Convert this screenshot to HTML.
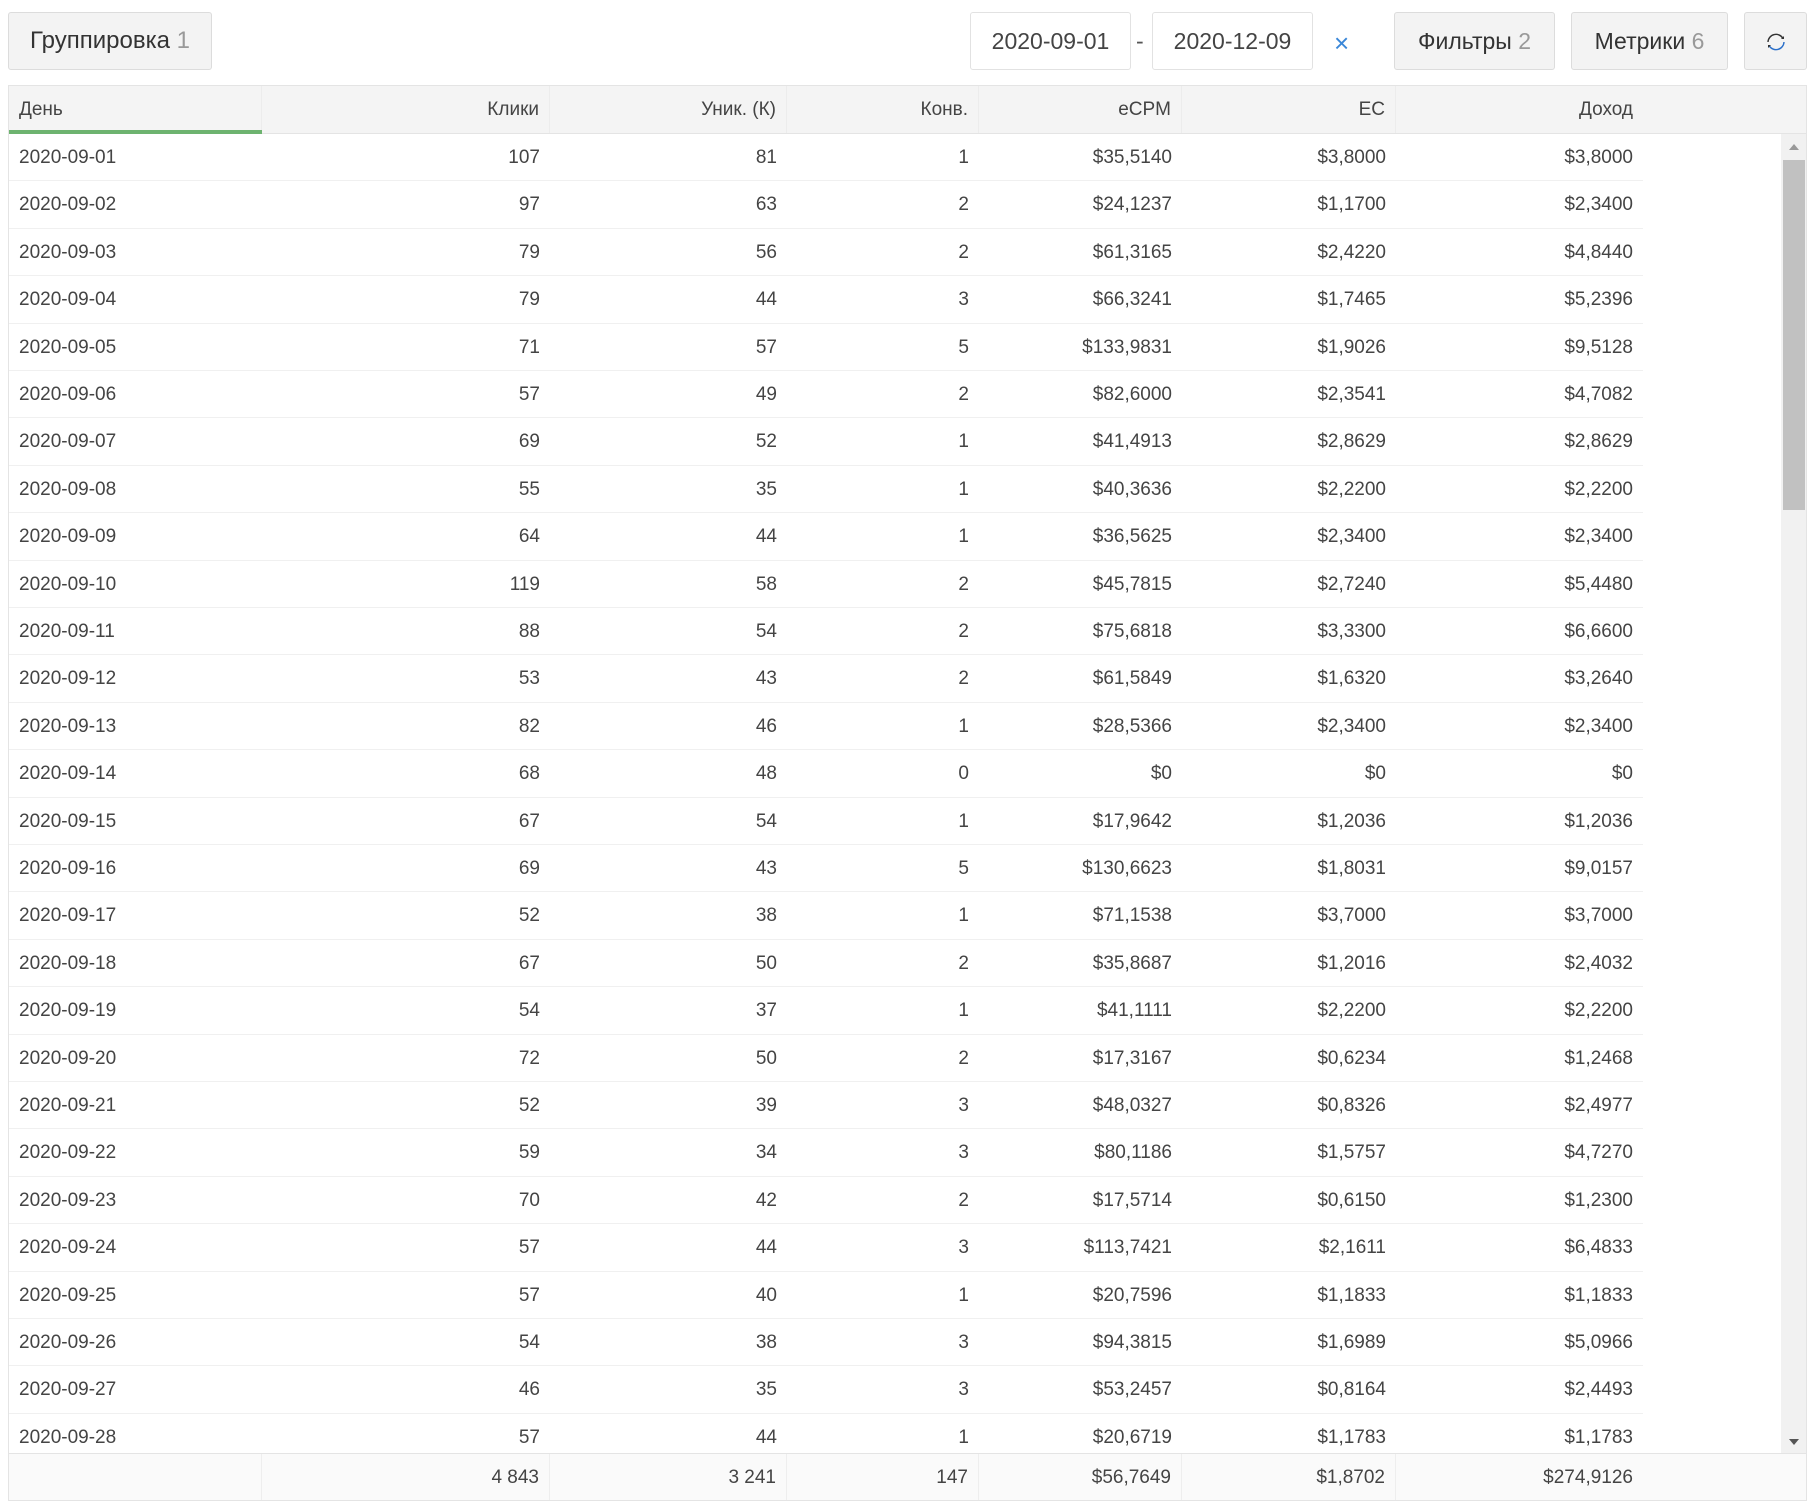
<!DOCTYPE html>
<html><head><meta charset="utf-8"><style>
*{box-sizing:border-box;margin:0;padding:0}
body{width:1815px;height:1508px;background:#fff;font-family:"Liberation Sans",Arial,sans-serif;color:#333;position:relative;overflow:hidden}
.btn{position:absolute;top:12px;height:58px;border:1px solid #dcdcdc;border-radius:3px;background:#f3f3f3;font-size:23px;line-height:56px;text-align:center;color:#333}
.btn span{color:#999}
.inp{position:absolute;top:12px;height:58px;border:1px solid #e2e2e2;border-radius:3px;background:#fff;font-size:23px;line-height:56px;text-align:center;color:#444}
.tbl{position:absolute;left:8px;top:85px;width:1799px;height:1416px;border:1px solid #e4e4e4;overflow:hidden}
.row{position:absolute;left:0;height:47.4px;width:1634px;border-bottom:1px solid #f0f0f0;font-size:19px;color:#444}
.row div{position:absolute;top:0;height:100%;line-height:47px;text-align:right;padding-right:10px}
.hdr{position:absolute;left:0;top:0;width:1799px;height:48px;background:#f4f4f4;border-bottom:1px solid #e4e4e4}
.hdr div{position:absolute;top:0;height:47px;line-height:48px;text-align:right;padding-right:10px;font-size:19px;color:#444;border-right:1px solid #ececec}
.ftr{position:absolute;left:0;top:1367px;width:1799px;height:48px;background:#fafafa;border-top:1px solid #e4e4e4}
.ftr div{position:absolute;top:0;height:47px;line-height:47px;text-align:right;padding-right:10px;font-size:19px;color:#444;border-right:1px solid #eee}
.c0{left:0;width:253px;text-align:left!important;padding-left:10px}
.c1{left:253px;width:288px}.c2{left:541px;width:237px}.c3{left:778px;width:192px}.c4{left:970px;width:203px}.c5{left:1173px;width:214px}.c6{left:1387px;width:247px}
.sb{position:absolute;left:1772px;top:48px;width:26px;height:1319px;background:#f1f1f1}
</style></head><body>
<div class="btn" style="left:8px;width:204px;font-size:24px">Группировка <span>1</span></div>
<div class="inp" style="left:970px;width:161px">2020-09-01</div>
<div style="position:absolute;left:1136px;top:12px;line-height:58px;font-size:23px;color:#555">-</div>
<div class="inp" style="left:1152px;width:161px">2020-12-09</div>
<div style="position:absolute;left:1334px;top:14px;line-height:58px;font-size:26px;color:#3a87d8">×</div>
<div class="btn" style="left:1394px;width:161px">Фильтры <span>2</span></div>
<div class="btn" style="left:1571px;width:157px">Метрики <span>6</span></div>
<div class="btn" style="left:1744px;width:63px"><svg width="24" height="24" viewBox="0 0 24 24" style="margin-top:17px"><path d="M4 12a8 8 0 0 1 15-3.5" fill="none" stroke="#333" stroke-width="1.4"/><path d="M20 12a8 8 0 0 1-15 3.5" fill="none" stroke="#2a6fc9" stroke-width="1.4"/><path d="M17 9l3 0 0-3z" fill="#333"/><path d="M7 15l-3 0 0 3z" fill="#333"/></svg></div>
<div class="tbl">
<div class="hdr"><div class="c0">День<span style="position:absolute;left:0;bottom:-1px;width:253px;height:4px;background:#6db36f"></span></div><div class="c1">Клики</div><div class="c2">Уник. (К)</div><div class="c3">Конв.</div><div class="c4">eCPM</div><div class="c5">EC</div><div class="c6" style="border-right:none">Доход</div></div>
<div id="rows"></div>
<div class="sb"><div style="position:absolute;left:8px;top:10px;border:5px solid transparent;border-bottom:6px solid #999;border-top:none"></div><div style="position:absolute;left:2px;top:26px;width:22px;height:350px;background:#c1c1c1"></div><div style="position:absolute;left:8px;bottom:8px;border:5px solid transparent;border-top:6px solid #555;border-bottom:none"></div></div>
<div class="ftr"><div class="c0"></div><div class="c1">4 843</div><div class="c2">3 241</div><div class="c3">147</div><div class="c4">$56,7649</div><div class="c5">$1,8702</div><div class="c6" style="border-right:none">$274,9126</div></div>
</div>
<script>
var d=[["107","81","1","$35,5140","$3,8000","$3,8000"],["97","63","2","$24,1237","$1,1700","$2,3400"],["79","56","2","$61,3165","$2,4220","$4,8440"],["79","44","3","$66,3241","$1,7465","$5,2396"],["71","57","5","$133,9831","$1,9026","$9,5128"],["57","49","2","$82,6000","$2,3541","$4,7082"],["69","52","1","$41,4913","$2,8629","$2,8629"],["55","35","1","$40,3636","$2,2200","$2,2200"],["64","44","1","$36,5625","$2,3400","$2,3400"],["119","58","2","$45,7815","$2,7240","$5,4480"],["88","54","2","$75,6818","$3,3300","$6,6600"],["53","43","2","$61,5849","$1,6320","$3,2640"],["82","46","1","$28,5366","$2,3400","$2,3400"],["68","48","0","$0","$0","$0"],["67","54","1","$17,9642","$1,2036","$1,2036"],["69","43","5","$130,6623","$1,8031","$9,0157"],["52","38","1","$71,1538","$3,7000","$3,7000"],["67","50","2","$35,8687","$1,2016","$2,4032"],["54","37","1","$41,1111","$2,2200","$2,2200"],["72","50","2","$17,3167","$0,6234","$1,2468"],["52","39","3","$48,0327","$0,8326","$2,4977"],["59","34","3","$80,1186","$1,5757","$4,7270"],["70","42","2","$17,5714","$0,6150","$1,2300"],["57","44","3","$113,7421","$2,1611","$6,4833"],["57","40","1","$20,7596","$1,1833","$1,1833"],["54","38","3","$94,3815","$1,6989","$5,0966"],["46","35","3","$53,2457","$0,8164","$2,4493"],["57","44","1","$20,6719","$1,1783","$1,1783"]];
var h="";for(var i=0;i<d.length;i++){var day=("0"+(i+1)).slice(-2);h+='<div class="row" style="top:'+(48+i*47.4)+'px"><div class="c0">2020-09-'+day+'</div>';for(var j=0;j<6;j++)h+='<div class="c'+(j+1)+'">'+d[i][j]+'</div>';h+='</div>';}
document.getElementById("rows").innerHTML=h;
</script>
</body></html>
